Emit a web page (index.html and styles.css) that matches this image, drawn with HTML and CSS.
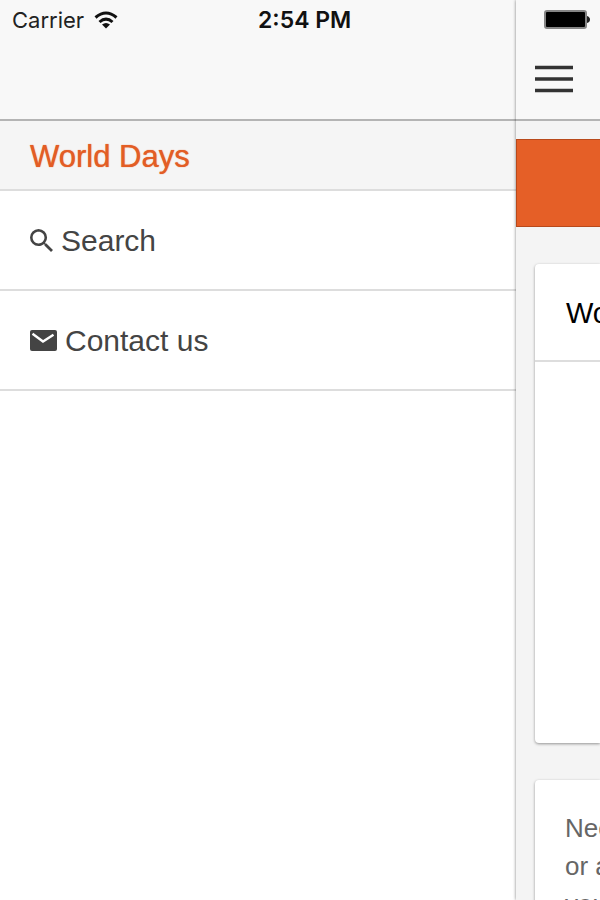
FILE: index.html
```html
<!DOCTYPE html>
<html lang="en">
<head>
<meta charset="utf-8">
<meta name="viewport" content="width=device-width, initial-scale=1">
<title>World Days</title>
<link rel="stylesheet" href="styles.css">
</head>
<body>
<div class="app">
  <aside class="menu">
    <header class="bar status">
      <span class="carrier">Carrier
        <svg class="wifi" viewBox="0 0 24 18" aria-hidden="true"><g fill="none" stroke="#111" stroke-width="3"><path d="M1.500 6.500Q12-2.500 22.500 6.500"/><path d="M5.500 11Q12 5.200 18.500 11"/></g><path d="M8 13.500Q12 10.500 16 13.500L12 17.500Z" fill="#111"/></svg>
      </span>
      <time class="clock">2:54 PM</time>
    </header>
    <h1 class="menu-title">World Days</h1>
    <nav>
      <a class="item" href="#search">
        <svg class="icon-search" viewBox="3 3 17.500 17.500" aria-hidden="true"><path fill="#444" d="M15.500 14h-.79l-.28-.27A6.470 6.470 0 0 0 16 9.500 6.500 6.500 0 1 0 9.500 16c1.610 0 3.090-.59 4.230-1.570l.27.28v.79l5 4.990L20.490 19l-4.990-5zm-6 0C7.010 14 5 11.990 5 9.500S7.010 5 9.500 5 14 7.010 14 9.500 11.990 14 9.500 14z"/></svg>
        <span>Search</span>
      </a>
      <a class="item" href="#contact">
        <svg class="icon-mail" viewBox="0 0 27 21" aria-hidden="true"><rect width="27" height="21" rx="2" fill="#444"/><path d="M2.500 3.800 13 11.500 23.500 4.800" fill="none" stroke="#fff" stroke-width="2.400"/></svg>
        <span>Contact us</span>
      </a>
    </nav>
  </aside>
  <main class="page">
    <header class="bar page-bar">
      <svg class="battery" viewBox="0 0 46 20" aria-hidden="true"><rect x="1" y="1" width="41" height="17" rx="2" fill="#000" stroke="#858585" stroke-width="2"/><path d="M43 6q3 1 3 3.500T43 13z" fill="#222"/></svg>
      <button class="toggle" type="button" aria-label="Menu">
        <svg viewBox="0 0 38 28" aria-hidden="true"><path d="M0 2.500H38M0 14H38M0 25.500H38" stroke="#333" stroke-width="3.500"/></svg>
      </button>
    </header>
    <div class="banner"></div>
    <section class="card">
      <h2 class="card-title">World</h2>
      <div class="card-body"></div>
    </section>
    <section class="card note">Need<br>or a<br>you</section>
  </main>
</div>
</body>
</html>
```
FILE: styles.css
```css
* {
  box-sizing: border-box;
}

body {
  margin: 0;
  font-family: "Liberation Sans", Arial, sans-serif;
  background: #fff;
}

.app {
  display: flex;
  height: 100vh;
  overflow: hidden;
}

.menu {
  flex: 0 0 86%;
  background: #fff;
}

.bar {
  height: 121px;
  background: #f8f8f8;
  border-bottom: 2px solid #b4b4b4;
}

.status {
  display: grid;
  grid-template-columns: 1fr 1fr;
  padding-top: 6px;
  font-family: Inter, sans-serif;
  font-size: 22px;
  line-height: 28px;
  color: #222;
}

.carrier {
  display: flex;
  align-items: center;
  align-self: start;
  gap: 10px;
  padding-left: 12px;
}

.wifi {
  width: 24px;
  height: 18px;
}

.clock {
  font-size: 23px;
  font-weight: 600;
  color: #111;
}

.menu-title {
  margin: 0;
  padding: 2px 30px 0;
  height: 70px;
  line-height: 68px;
  font-size: 31px;
  font-weight: 400;
  color: #e35d25;
  text-shadow: 0 0 1px #e35d25;
  background: #f5f5f5;
  border-bottom: 2px solid #ddd;
}

.item {
  display: flex;
  align-items: center;
  gap: 8px;
  height: 100px;
  padding: 0 30px;
  font-size: 30px;
  color: #444;
  text-decoration: none;
  border-bottom: 2px solid #ddd;
}

.item span {
  padding-top: 2px;
}

.icon-search {
  width: 23px;
  height: 23px;
}

.icon-mail {
  width: 27px;
  height: 21px;
}

.page {
  flex: 1;
  min-width: 0;
  overflow: hidden;
  background: #f4f4f4;
  box-shadow: 0 0 3px rgba(0, 0, 0, 0.5);
}

.page-bar {
  display: flex;
  flex-direction: column;
  align-items: flex-start;
  gap: 35px;
  padding: 10px 0 0 19px;
}

.battery {
  width: 46px;
  height: 20px;
  margin-left: 9px;
  flex: none;
}

.toggle {
  padding: 0;
  border: 0;
  background: none;
}

.toggle svg {
  display: block;
  width: 38px;
  height: 28px;
}

.banner {
  height: 88px;
  margin-top: 18px;
  background: #e55f27;
  border: 1px solid #b8491b;
  border-right: 0;
}

.card {
  margin: 37px 0 0 19px;
  background: #fff;
  border-radius: 4px 0 0 4px;
  box-shadow: 0 1px 3px rgba(0, 0, 0, 0.4);
  white-space: nowrap;
}

.card-title {
  margin: 0;
  padding-left: 31px;
  height: 98px;
  line-height: 98px;
  font-size: 29px;
  font-weight: 400;
  color: #000;
  border-bottom: 2px solid #ddd;
}

.card-body {
  height: 381px;
}

.note {
  padding: 29px 30px;
  font-size: 26px;
  line-height: 38px;
  color: #666;
}
```
